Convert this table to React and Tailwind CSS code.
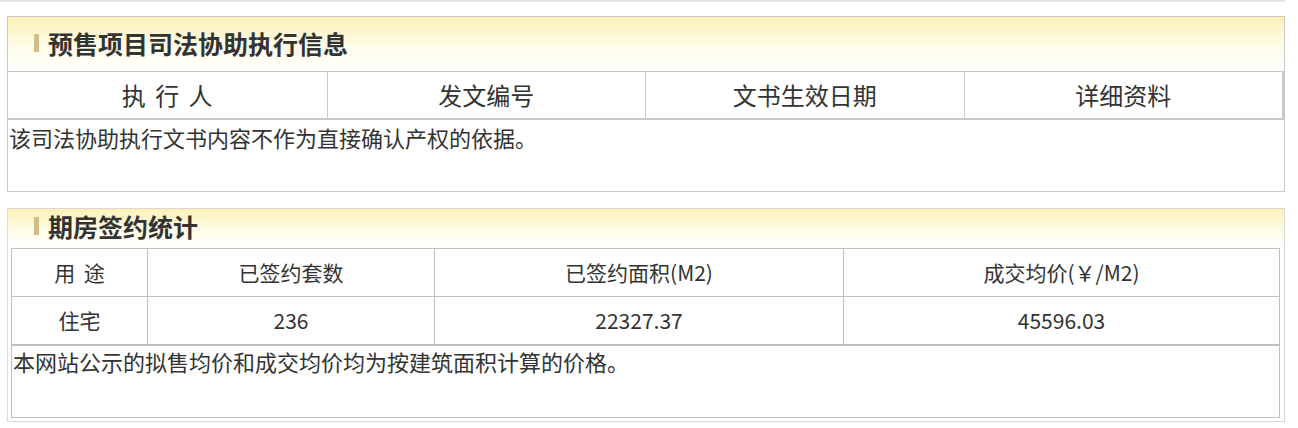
const font = { fontFamily: '"Noto Sans CJK SC", "Noto Sans", sans-serif' };

const SectionTitle = ({ text, h }) => (
  <div
    className={`flex items-center pl-[26px] bg-[linear-gradient(#fcf2b6,#fffcea_55%,#ffffff)] ${h}`}
  >
    <span className="w-[5px] h-[18px] bg-[#d4bc88] mr-[9px]" />
    <span className="text-[25px] font-bold text-[#333] leading-none">{text}</span>
  </div>
);

const App = () => {
  return (
    <div className="w-[1298px] h-[428px] bg-white text-[#333] overflow-hidden" style={font}>
      <div className="w-[1285px] h-[2px] bg-[#e2e2e2]" />

      {/* 预售项目司法协助执行信息 */}
      <div className="mt-[14px] ml-[7px] w-[1278px] border border-[#c8c8c8]">
        <SectionTitle text="预售项目司法协助执行信息" h="h-[54px] pb-[2px]" />
        <div className="grid grid-cols-4 border-t border-[#c8c8c8] h-[47px] text-[24px] border-r-2 border-r-[#c8c8c8]">
          <div className="flex items-center justify-center [word-spacing:4px]">执 行 人</div>
          <div className="flex items-center justify-center border-l border-[#c8c8c8]">发文编号</div>
          <div className="flex items-center justify-center border-l border-[#c8c8c8]">文书生效日期</div>
          <div className="flex items-center justify-center border-l border-[#c8c8c8]">详细资料</div>
        </div>
        <div className="border-t-2 border-[#c8c8c8] h-[73px] pl-[1px] pt-[2px] text-[22px] leading-[30px]">
          该司法协助执行文书内容不作为直接确认产权的依据。
        </div>
      </div>

      {/* 期房签约统计 */}
      <div className="mt-[16px] ml-[7px] w-[1278px] border border-[#d8d8d8] pb-[3px]">
        <SectionTitle text="期房签约统计" h="h-[39px] pb-[5px]" />
        <div className="mx-[3px] w-[1269px] border border-[#c0c0c0] text-[21px]">
          <div className="grid grid-cols-[135px_287px_409px_1fr] h-[47px]">
            <div className="flex items-center justify-center [word-spacing:4px]">用 途</div>
            <div className="flex items-center justify-center border-l border-[#c0c0c0]">已签约套数</div>
            <div className="flex items-center justify-center border-l border-[#c0c0c0]">已签约面积(M2)</div>
            <div className="flex items-center justify-center border-l border-[#c0c0c0]">成交均价(￥/M2)</div>
          </div>
          <div className="grid grid-cols-[135px_287px_409px_1fr] h-[48px] border-t border-[#c0c0c0]">
            <div className="flex items-center justify-center">住宅</div>
            <div className="flex items-center justify-center border-l border-[#c0c0c0]">236</div>
            <div className="flex items-center justify-center border-l border-[#c0c0c0]">22327.37</div>
            <div className="flex items-center justify-center border-l border-[#c0c0c0]">45596.03</div>
          </div>
          <div className="border-t-2 border-[#c0c0c0] h-[73px] pl-[1px] text-[22px] leading-[30px]">
            本网站公示的拟售均价和成交均价均为按建筑面积计算的价格。
          </div>
        </div>
      </div>
    </div>
  );
};

export default App;
